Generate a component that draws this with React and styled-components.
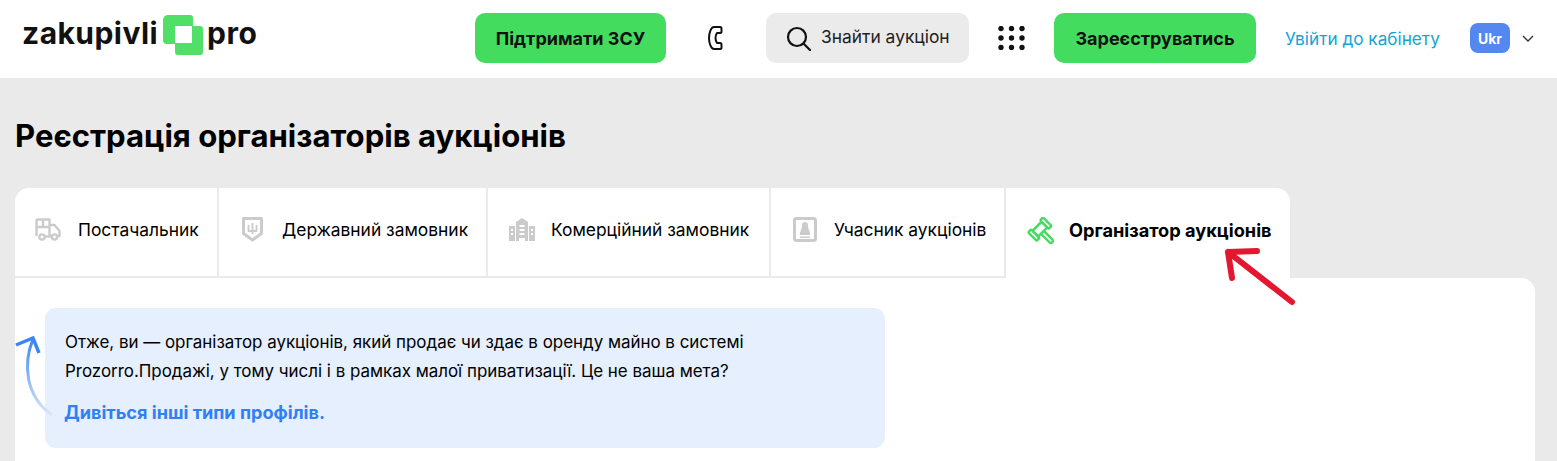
import React from "react";
import styled, { createGlobalStyle } from "styled-components";

const Global = createGlobalStyle`
  html, body { margin: 0; padding: 0; background: #eaeaea; }
  body { font-family: Inter, "Noto Sans", sans-serif; color: #000; overflow: hidden; }
`;
const Page = styled.div`width: 1557px; height: 461px; overflow: hidden; position: relative;`;
const Header = styled.header`
  height: 78px; background: #fff; display: flex; align-items: center; padding: 0 24px 2px 22px; box-sizing: border-box;
`;
const Logo = styled.div`
  display: flex; align-items: center; height: 50px; margin-top: -10px; margin-right: 219px;
  font: 700 30px/1 Inter, sans-serif; letter-spacing: 0.45px; color: #111; width: 234px; flex: none;
`;
const LogoMark = styled.svg`width: 40px; height: 40px; flex: none; margin: 4px 4px 0 5px;`;
const GreenButton = styled.button`
  height: 50px; width: ${p => p.$w}px; border: 0; border-radius: 10px; background: #44dc5f; font: 700 18px Inter, sans-serif; color: #111; flex: none; padding: 0;
`;
const IconBtn = styled.div`display: flex; flex: none; margin: ${p => p.$m};`;
const Search = styled.div`
  width: 203px; height: 50px; background: #ebebeb; border-radius: 10px; display: flex; align-items: center; gap: 10px; padding-left: 20px; box-sizing: border-box; font-size: 17.4px; color: #222; flex: none;
`;
const SearchLabel = styled.span`margin-top: -3px;`;
const Login = styled.a`margin: 0 31px 0 29px; color: #12a5d4; font-size: 17.2px; flex: none; width: 154px; white-space: nowrap;`;
const Lang = styled.div`
  width: 40px; height: 30px; border-radius: 8px; background: #5487ef; color: #fff; font-weight: 700; font-size: 14px; display: flex; align-items: center; justify-content: center; flex: none;
`;
const Main = styled.main`padding: 0 22px 0 15px;`;
const Title = styled.h1`margin: 0; padding-top: 39px; height: 71px; font-size: 31.1px; line-height: 38px; font-weight: 700;`;
const Tabs = styled.div`display: flex; height: 90px;`;
const Tab = styled.div`
  width: ${p => p.$w}px; height: 90px; box-sizing: border-box; background: #fff; display: flex; align-items: center; gap: ${p => p.$gap}px; padding: 0 0 6px ${p => p.$pad}px; flex: none;
  font-size: ${p => p.$active ? 18.2 : 17.4}px; font-weight: ${p => p.$active ? 700 : 400}; white-space: nowrap;
  border-right: ${p => p.$active ? 0 : "2px solid #eaeaea"};
  border-bottom: ${p => p.$active ? 0 : "2px solid #eaeaea"};
  border-radius: ${p => p.$radius || 0};
`;
const Card = styled.section`background: #fff; height: 200px; border-radius: 0 14px 0 0; padding: 30px 0 0 30px; box-sizing: border-box; position: relative;`;
const Note = styled.div`
  width: 840px; height: 140px; background: #e5effd; border-radius: 11px; padding: 20px; box-sizing: border-box; font-size: 16.93px; line-height: 29px; position: relative;
`;
const NoteLink = styled.a`display: block; margin-top: 12px; color: #2f80f7; font-weight: 700; font-size: 18.1px; margin-left: -1px;`;
const CurveArrow = styled.svg`position: absolute; left: 0; top: 56px; width: 42px; height: 84px;`;
const RedArrow = styled.svg`position: absolute; left: 1220px; top: 245px; width: 80px; height: 62px;`;

const G = "#cbcbcb";

export default function App() {
  return (
    <Page>
      <Global />
      <Header>
        <Logo>
          zakupivli
          <LogoMark viewBox="0 0 40 40">
            <path fill="#50e068" fillRule="evenodd" d="M5 0h22a3 3 0 0 1 3 3v8h7a3 3 0 0 1 3 3v23a3 3 0 0 1-3 3H15a3 3 0 0 1-3-3v-8H4a4 4 0 0 1-4-4V5a5 5 0 0 1 5-5zM12 11v17h17V11z" />
          </LogoMark>
          pro
        </Logo>
        <GreenButton $w={191}>Підтримати ЗСУ</GreenButton>
        <IconBtn $m="0 43px 0 42px">
          <svg width="15" height="24" viewBox="0 0 15 24" fill="none" stroke="#111" strokeWidth="2" strokeLinejoin="round"><path d="M6 1h6c1 0 1.5.6 1.5 1.5v3c0 .8-.7 1.5-1.5 1.5H9c-1 1.5-1.5 3-1.5 5s.5 3.5 1.5 5h3c.8 0 1.5.7 1.5 1.5v3c0 .8-.7 1.5-1.5 1.5H6C3 23 1 17 1 12S3 1 6 1z" /></svg>
        </IconBtn>
        <Search>
          <svg width="25" height="25" viewBox="0 0 25 25" fill="none" stroke="#111" strokeWidth="2.2" strokeLinecap="round"><circle cx="11" cy="11" r="9" /><path d="M17.5 17.5L24 24" /></svg>
          <SearchLabel>Знайти аукціон</SearchLabel>
        </Search>
        <IconBtn $m="0 29px">
          <svg width="27" height="24" viewBox="0 0 27 24" fill="#111">
            {[3, 13.5, 24].flatMap(x => [2.5, 12, 21.5].map(y => <circle key={x + "-" + y} cx={x} cy={y} r="2.7" />))}
          </svg>
        </IconBtn>
        <GreenButton $w={202}>Зареєструватись</GreenButton>
        <Login>Увійти до кабінету</Login>
        <Lang>Ukr</Lang>
        <IconBtn $m="0 0 0 12px">
          <svg width="12" height="7" viewBox="0 0 12 7" fill="none" stroke="#333" strokeWidth="1.4"><path d="M1 1l5 5 5-5" /></svg>
        </IconBtn>
      </Header>
      <Main>
        <Title>Реєстрація організаторів аукціонів</Title>
        <Tabs>
          <Tab $w={204} $pad={20} $gap={17} $radius="14px 0 0 0">
            <svg width="26" height="23" viewBox="0 0 26 23" fill="none" stroke={G} strokeWidth="2.4" strokeLinejoin="round">
              <path d="M1.5 18V2.5a1 1 0 0 1 1-1h12v17M1.5 9h13M8 1.5V9M14.5 7h5l5 6v5h-2M4 18h0" />
              <path d="M10 18.5h6" />
              <circle cx="7" cy="19" r="2.6" /><circle cx="19.5" cy="19" r="2.6" />
            </svg>
            Постачальник
          </Tab>
          <Tab $w={269} $pad={23} $gap={19}>
            <svg width="21" height="25" viewBox="0 0 21 25" fill="none" stroke={G} strokeWidth="3" strokeLinejoin="round">
              <path d="M1.5 1.5h18v15l-9 6.5-9-6.5z" />
              <path d="M6.5 8v6h8V8M10.5 6v11" strokeWidth="1.8" />
            </svg>
            Державний замовник
          </Tab>
          <Tab $w={283} $pad={21} $gap={16}>
            <svg width="26" height="24" viewBox="0 0 26 24">
              <path fill={G} fillRule="evenodd" d="M7 24V5l6-4 6 4v19h-3v-3h-6v3zM10.5 8v2h5V8zM10.5 12v2h5v-2zM10.5 16v2h5v-2z" />
              <path fill={G} fillRule="evenodd" d="M0 24V9h6v15zM2 12v2h2v-2zM2 16v2h2v-2zM20 24V9h6v15zM22 12v2h2v-2zM22 16v2h2v-2z" />
            </svg>
            Комерційний замовник
          </Tab>
          <Tab $w={235} $pad={22} $gap={17}>
            <svg width="24" height="25" viewBox="0 0 24 25">
              <rect x="1.5" y="1.5" width="21" height="22" rx="2" fill="none" stroke={G} strokeWidth="3" />
              <path fill={G} fillRule="evenodd" d="M9 8a3 3 0 0 1 6 0v2l2 6v2H7v-2l2-6zM7 19.5h10V21H7z" />
            </svg>
            Учасник аукціонів
          </Tab>
          <Tab $w={284} $pad={20} $gap={15} $active $radius="0 14px 0 0">
            <svg width="28" height="27" viewBox="0 0 27 27" fill="#fff" stroke="#44dc5f" strokeWidth="2.4" strokeLinejoin="round">
              <g transform="translate(13 12.5) rotate(45)">
                <rect x="3" y="-2" width="15" height="4" rx="1" />
                <rect x="-4" y="-7" width="8" height="13" />
                <rect x="-6" y="-11" width="12" height="4" rx="1" />
                <rect x="-6" y="6" width="12" height="4" rx="1" />
              </g>
            </svg>
            Організатор аукціонів
          </Tab>
        </Tabs>
        <Card>
          <Note>
            Отже, ви — організатор аукціонів, який продає чи здає в оренду майно в системі<br />
            Prozorro.Продажі, у тому числі і в рамках малої приватизації. Це не ваша мета?
            <NoteLink>Дивіться інші типи профілів.</NoteLink>
          </Note>
          <CurveArrow viewBox="0 0 42 84" fill="none">
            <defs><linearGradient id="g" gradientUnits="userSpaceOnUse" x1="0" y1="4" x2="0" y2="81"><stop offset="0" stopColor="#3a86f5" /><stop offset="1" stopColor="#d6e6fd" /></linearGradient></defs>
            <path d="M18 5C8 30 10 62 37 81" stroke="url(#g)" strokeWidth="3" />
            <path d="M1 11L18 4l6 15" stroke="#3a86f5" strokeWidth="3.4" />
          </CurveArrow>
        </Card>
      </Main>
      <RedArrow viewBox="0 0 80 62" fill="none" stroke="#e3172f" strokeWidth="6" strokeLinecap="round" strokeLinejoin="round">
        <path d="M8 7l64 50M8 7l29-1M8 7l4 26" />
      </RedArrow>
    </Page>
  );
}
